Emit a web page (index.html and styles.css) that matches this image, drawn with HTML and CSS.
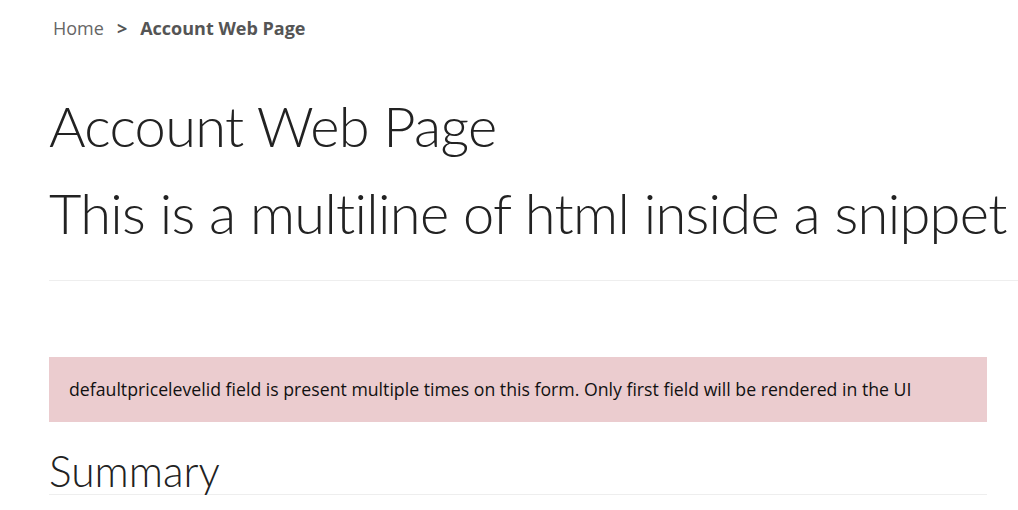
FILE: index.html
```html
<!DOCTYPE html>
<html>
<head>
<meta charset="utf-8">
<link rel="stylesheet" href="styles.css">
</head>
<body>
<div class="page">
  <nav class="crumbs">
    <span class="crumb-link">Home</span>
    <span class="crumb-sep">&gt;</span>
    <span class="crumb-current">Account Web Page</span>
  </nav>
  <header class="page-header">
    <h1 class="title">Account Web Page</h1>
    <h1 class="title">This is a multiline of html inside a snippet</h1>
  </header>
  <div class="alert">defaultpricelevelid field is present multiple times on this form. Only first field will be rendered in the UI</div>
  <section class="section">
    <h2 class="section-title">Summary</h2>
  </section>
</div>
</body>
</html>
```

FILE: styles.css
```css
html, body {
  margin: 0;
  padding: 0;
  background: #fff;
}
body {
  font-family: "Open Sans", "Noto Sans", sans-serif;
  color: #333;
  overflow: hidden;
}
.page {
  padding-left: 49px;
}
.crumbs {
  display: flex;
  align-items: baseline;
  gap: 13px;
  padding-left: 4px;
  padding-top: 15px;
  font-size: 18px;
  line-height: 26px;
  color: #666;
}
.crumb-sep, .crumb-current {
  font-weight: 700;
  color: #555;
}
.page-header {
  margin-top: 41px;
  border-bottom: 1px solid #eee;
  padding-bottom: 24px;
}
.title {
  margin: 0;
  font-family: Lato, "Open Sans", sans-serif;
  font-weight: 300;
  font-size: 56px;
  letter-spacing: -0.7px;
  line-height: 87px;
  color: #222;
  white-space: nowrap;
}
.alert {
  margin-top: 76px;
  width: 938px;
  box-sizing: border-box;
  background: #ebcccf;
  color: #111;
  font-size: 17.7px;
  padding: 21px 20px;
  line-height: 23px;
}
.section {
  width: 938px;
  margin-top: 26px;
}
.section-title {
  margin: 0;
  font-family: Lato, "Open Sans", sans-serif;
  font-weight: 300;
  font-size: 42.5px;
  line-height: 46px;
  color: #222;
  border-bottom: 1px solid #eee;
}
```
